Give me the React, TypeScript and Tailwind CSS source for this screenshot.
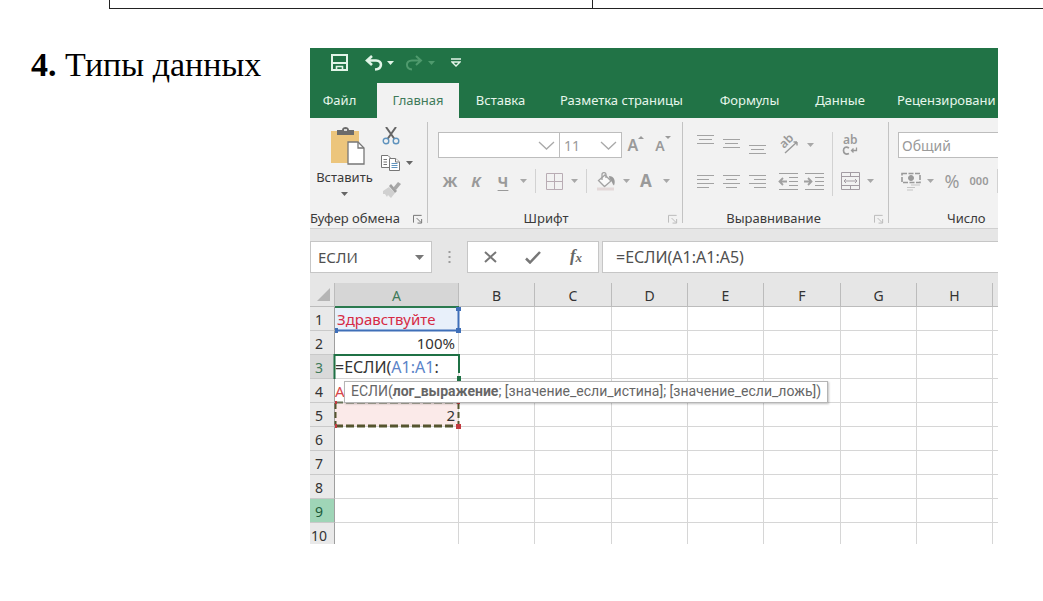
import React from 'react';

const COLUMNS = ['A', 'B', 'C', 'D', 'E', 'F', 'G', 'H'];
const ROWS = [1, 2, 3, 4, 5, 6, 7, 8, 9, 10];

function Arrow({ className = 'text-[#a8a8a8]' }: { className?: string }) {
  return (
    <svg width="7" height="4" viewBox="0 0 7 4" className={className} aria-hidden="true">
      <path d="M0 0h7L3.5 4z" fill="currentColor" />
    </svg>
  );
}

function IconButton({ label, className, children }: { label: string; className: string; children: React.ReactNode }) {
  return (
    <button type="button" aria-label={label} className={`flex shrink-0 items-center justify-center ${className}`}>
      {children}
    </button>
  );
}

function Launcher({ className }: { className: string }) {
  return (
    <button type="button" aria-label="Параметры группы" className={className}>
      <svg width="10" height="10" viewBox="0 0 11 11" fill="none" stroke="currentColor" strokeWidth="1.100" aria-hidden="true">
        <path d="M.5 9.500V1.500H9.500M4 4.500L9 9.500M9.500 5.500V10H5" />
      </svg>
    </button>
  );
}

function Lines({ rows }: { rows: [number, number, number][] }) {
  return (
    <svg width="18" height="26" viewBox="0 0 18 26" stroke="#a3a3a3" aria-hidden="true">
      {rows.map(([y, from, to]) => (
        <path key={y} d={`M${from} ${y + 0.5}H${to}`} />
      ))}
    </svg>
  );
}

function TitleBar() {
  return (
    <div className="flex h-[35px] items-center bg-[#217346] pl-[20px] pb-[6px] text-[#e2f5e8]">
      <IconButton label="Сохранить" className="w-[18px]">
        <svg width="17" height="17" viewBox="0 0 17 17" fill="none" stroke="currentColor" strokeWidth="2" aria-hidden="true">
          <path d="M1 1H16V16H1zM1 9H16" />
          <path d="M5.500 16V12.500H11.500V16" strokeWidth="1.600" />
        </svg>
      </IconButton>
      <IconButton label="Отменить" className="ml-[16px] w-[20px]">
        <svg width="18" height="16" viewBox="0 0 18 16" fill="none" stroke="currentColor" strokeWidth="2.600" aria-hidden="true">
          <path d="M7 1L2 5.500L7 10M2 5.500H11C18 5.500 17.500 14 10 14.500" />
        </svg>
      </IconButton>
      <IconButton label="Список отмены" className="w-[12px]"><Arrow className="text-[#e2f5e8]" /></IconButton>
      <IconButton label="Повторить" className="ml-[8px] w-[20px] text-[#4f9a6d]">
        <svg width="18" height="16" viewBox="0 0 18 16" fill="none" stroke="currentColor" strokeWidth="2" aria-hidden="true">
          <path d="M11 1L16 5.500L11 10M16 5.500H7C0 5.500 .5 14 7 14.500" />
        </svg>
      </IconButton>
      <IconButton label="Список повтора" className="w-[14px]"><Arrow className="text-[#4f9a6d]" /></IconButton>
      <IconButton label="Настройка панели" className="ml-[12px] w-[12px]">
        <svg width="10" height="9" viewBox="0 0 10 9" fill="none" stroke="currentColor" strokeWidth="1.400" aria-hidden="true">
          <path d="M0 1H10M1 4H9L5 8z" />
        </svg>
      </IconButton>
    </div>
  );
}

function Tabs() {
  const tab = 'shrink-0 whitespace-nowrap h-full text-center';
  return (
    <nav className="flex h-[35px] overflow-hidden bg-[#217346] text-[13px] text-[#e6f6eb]">
      <button type="button" className={`${tab} w-[67px] pr-[8px]`}>Файл</button>
      <button type="button" className={`${tab} w-[82px] bg-[#f2f2f2] text-[#3f7a5a]`}>Главная</button>
      <button type="button" className={`${tab} w-[83px]`}>Вставка</button>
      <button type="button" className={`${tab} w-[159px]`}>Разметка страницы</button>
      <button type="button" className={`${tab} w-[97px]`}>Формулы</button>
      <button type="button" className={`${tab} w-[84px]`}>Данные</button>
      <button type="button" className={`${tab} pl-[15px]`}>Рецензировани</button>
    </nav>
  );
}

function GroupDivider() {
  return <div className="mt-[4px] h-[101px] w-px shrink-0 bg-[#c3c3c3]" />;
}

function ClipboardGroup() {
  return (
    <section className="flex w-[117px] shrink-0 flex-col text-[#3a3a3a]">
      <div className="flex h-[91px] pt-[8px]">
        <button type="button" className="flex w-[69px] shrink-0 flex-col items-center text-[13px]">
          <svg width="36" height="40" viewBox="0 0 36 40" aria-hidden="true" className="ml-[6px] shrink-0">
            <path d="M1 5H29V37H1z" fill="#ecc57c" />
            <path d="M7 4H12C12 0 19 0 19 4H24V9H7z" fill="#6b6b6b" />
            <path d="M14 4H17" stroke="#fff" strokeWidth="1.500" />
            <path d="M18 16H28L34 22V38H18z" fill="#fff" stroke="#777" strokeWidth="1.300" />
            <path d="M28 16V22H34" fill="none" stroke="#777" strokeWidth="1.300" />
          </svg>
          <span className="leading-[22px]">Вставить</span>
          <span className="pt-[4px] leading-[18px]"><Arrow className="text-[#666]" /></span>
        </button>
        <div className="flex flex-col">
          <IconButton label="Вырезать" className="h-[20px] w-[24px]">
            <svg width="18" height="18" viewBox="0 0 18 18" fill="none" aria-hidden="true">
              <path d="M4 0L12.500 12M14 0L5.500 12" stroke="#666" strokeWidth="2" />
              <circle cx="4" cy="14" r="2.800" stroke="#5f93bd" strokeWidth="1.400" />
              <circle cx="14" cy="14" r="2.800" stroke="#5f93bd" strokeWidth="1.400" />
            </svg>
          </IconButton>
          <div className="mt-[7px] flex">
            <IconButton label="Копировать" className="h-[20px] w-[22px]">
              <svg width="19" height="18" viewBox="0 0 19 18" fill="#fff" stroke="#777" aria-hidden="true">
                <path d="M.5 1.500H7L10.500 5V13.500H.5z" />
                <path d="M2.500 5.500H6M2.500 8H6M2.500 10.500H6" />
                <path d="M8.500 4.500H14.500L18.500 8V16.500H8.500z" />
                <path d="M14.500 4.500V8H18.500" />
                <path d="M10.500 9.500H16.500M10.500 11.500H16.500M10.500 13.500H16.500" stroke="#5f93bd" />
              </svg>
            </IconButton>
            <IconButton label="Варианты копирования" className="w-[16px]"><Arrow className="text-[#666]" /></IconButton>
          </div>
          <IconButton label="Формат по образцу" className="mt-[7px] h-[20px] w-[24px]">
            <svg width="19" height="17" viewBox="0 0 19 17" aria-hidden="true">
              <path d="M1 9L7 5L13 11L9 16L6 13L5 15L3 12L1 12z" fill="#d0d0d0" />
              <path d="M7 4L9 2L15 9L13 11z" fill="#a0a0a0" />
              <path d="M11 6L16 0L19 2L14 8z" fill="#a8a8a8" />
            </svg>
          </IconButton>
        </div>
      </div>
      <div className="flex h-[19px] items-center justify-between pr-[4px] text-[13px]">
        <span className="whitespace-nowrap">Буфер обмена</span>
        <Launcher className="text-[#777]" />
      </div>
    </section>
  );
}

function Chevron() {
  return (
    <svg width="17" height="9" viewBox="0 0 17 9" fill="none" stroke="#a9a9a9" strokeWidth="1.300" className="pointer-events-none shrink-0" aria-hidden="true">
      <path d="M1 1L8.500 8L16 1" />
    </svg>
  );
}

function FontGroup() {
  return (
    <section className="flex w-[254px] shrink-0 flex-col pl-[10px] pt-[14px] text-[#9a9a9a]">
      <div className="flex h-[26px]">
        <div className="flex w-[122px] items-center border border-[#bdbdbd] bg-white pr-[4px]">
          <select aria-label="Шрифт" className="h-full min-w-0 flex-1 appearance-none bg-transparent"><option></option></select>
          <Chevron />
        </div>
        <div className="flex w-[62px] items-center border border-l-0 border-[#bdbdbd] bg-white pl-[4px] pr-[4px]">
          <select aria-label="Размер шрифта" className="h-full min-w-0 flex-1 appearance-none bg-transparent text-[14px]"><option>11</option></select>
          <Chevron />
        </div>
        <IconButton label="Увеличить размер шрифта" className="w-[28px] text-[16px] font-semibold">
          A<svg width="6" height="18" viewBox="0 0 6 18" aria-hidden="true"><path d="M0 3L3 0L6 3z" fill="currentColor" /></svg>
        </IconButton>
        <IconButton label="Уменьшить размер шрифта" className="w-[26px] text-[14px] font-semibold">
          A<svg width="6" height="18" viewBox="0 0 6 18" aria-hidden="true"><path d="M0 0H6L3 3z" fill="currentColor" /></svg>
        </IconButton>
      </div>
      <div className="mt-[8px] flex h-[30px] items-center text-[15px] font-bold">
        <IconButton label="Полужирный" className="w-[24px]">Ж</IconButton>
        <IconButton label="Курсив" className="w-[28px] italic">К</IconButton>
        <IconButton label="Подчёркнутый" className="w-[26px] underline underline-offset-3">Ч</IconButton>
        <IconButton label="Вид подчёркивания" className="w-[14px]"><Arrow /></IconButton>
        <div className="mx-[5px] h-[24px] w-px bg-[#d2d2d2]" />
        <IconButton label="Границы" className="w-[26px]">
          <svg width="17" height="17" viewBox="0 0 17 17" fill="none" stroke="#b9acb4" aria-hidden="true">
            <path d="M.5 .5H16.500V16.500H.5zM8.500 .5V16.500M.5 8.500H16.500" />
          </svg>
        </IconButton>
        <IconButton label="Вид границ" className="w-[14px]"><Arrow /></IconButton>
        <div className="mx-[5px] h-[24px] w-px bg-[#d2d2d2]" />
        <IconButton label="Цвет заливки" className="w-[28px]">
          <svg width="20" height="19" viewBox="0 0 20 19" fill="none" stroke="#a3a3a3" strokeWidth="1.300" aria-hidden="true">
            <path d="M9 3L15 9L8.500 14.500L2.500 8.500z" fill="#fafafa" />
            <path d="M6 8V2.500C6 0 10 0 10 2.500V6" />
            <path d="M13 4C18 4 20 9 18 13.500C16 12 16.500 9 13.500 7z" fill="#9a9a9a" stroke="none" />
            <path d="M1 17H18" stroke="#e3d8d8" strokeWidth="3" />
          </svg>
        </IconButton>
        <IconButton label="Выбор заливки" className="w-[12px]"><Arrow /></IconButton>
        <IconButton label="Цвет текста" className="w-[28px] text-[17px]">A</IconButton>
        <IconButton label="Выбор цвета" className="w-[12px]"><Arrow /></IconButton>
      </div>
      <div className="mt-[13px] flex h-[19px] items-center pr-[4px] text-[13px] text-[#3a3a3a]">
        <span className="flex-1 pr-[14px] text-center">Шрифт</span>
        <Launcher className="text-[#bbb]" />
      </div>
    </section>
  );
}

function AlignGroup() {
  return (
    <section className="flex w-[205px] shrink-0 flex-col pt-[14px] text-[#9a9a9a]">
      <div className="flex h-[64px]">
        <div className="flex w-[149px] flex-col pl-[10px]">
          <div className="flex h-[26px]">
            <IconButton label="По верхнему краю" className="w-[26px]"><Lines rows={[[3, 0, 17], [7, 2, 15], [11, 0, 17]]} /></IconButton>
            <IconButton label="По середине" className="w-[26px]"><Lines rows={[[7, 0, 17], [11, 2, 15], [15, 0, 17]]} /></IconButton>
            <IconButton label="По нижнему краю" className="w-[26px]"><Lines rows={[[13, 0, 17], [17, 2, 15], [21, 0, 17]]} /></IconButton>
            <IconButton label="Ориентация" className="w-[34px]">
              <svg width="22" height="20" viewBox="0 0 22 20" fill="none" stroke="currentColor" strokeWidth="1.400" className="overflow-visible" aria-hidden="true">
                <text x="0" y="0" transform="translate(7 14) rotate(-45)" fontSize="12" fontWeight="600" fill="currentColor" stroke="none">ab</text>
                <path d="M8 18L20 7M20 7H16.500M20 7V10.500" />
              </svg>
            </IconButton>
            <IconButton label="Варианты ориентации" className="w-[10px]"><Arrow /></IconButton>
          </div>
          <div className="mt-[8px] flex h-[30px]">
            <IconButton label="По левому краю" className="w-[26px]"><Lines rows={[[7, 0, 17], [11, 0, 12], [15, 0, 17], [19, 0, 12]]} /></IconButton>
            <IconButton label="По центру" className="w-[26px]"><Lines rows={[[7, 0, 17], [11, 3, 14], [15, 0, 17], [19, 3, 14]]} /></IconButton>
            <IconButton label="По правому краю" className="w-[26px]"><Lines rows={[[7, 0, 17], [11, 5, 17], [15, 0, 17], [19, 5, 17]]} /></IconButton>
            <IconButton label="Уменьшить отступ" className="w-[34px]">
              <svg width="20" height="17" viewBox="0 0 20 17" stroke="#a0a0a0" fill="none" aria-hidden="true">
                <path d="M1 .5H20M11 4.500H20M11 8.500H20M11 12.500H20M1 16.500H20" />
                <path d="M9 8.500H2M5 5L1.500 8.500L5 12" strokeWidth="1.800" />
              </svg>
            </IconButton>
            <IconButton label="Увеличить отступ" className="w-[18px]">
              <svg width="20" height="17" viewBox="0 0 20 17" stroke="#a0a0a0" fill="none" aria-hidden="true" className="shrink-0">
                <path d="M1 .5H20M11 4.500H20M11 8.500H20M11 12.500H20M1 16.500H20" />
                <path d="M0 8.500H7M4 5L7.500 8.500L4 12" strokeWidth="1.800" />
              </svg>
            </IconButton>
          </div>
        </div>
        <div className="w-px bg-[#d2d2d2]" />
        <div className="flex flex-col pl-[3px]">
          <IconButton label="Перенести текст" className="h-[26px] w-[28px]">
            <svg width="18" height="22" viewBox="0 0 18 22" fill="none" stroke="currentColor" strokeWidth="1.300" className="overflow-visible" aria-hidden="true">
              <text x="2" y="10" fontSize="12" fontWeight="600" fill="currentColor" stroke="none">ab</text>
              <path d="M8 14C4.500 12 2.500 14 2.500 16.500C2.500 19 4.500 21 8 19.500" strokeWidth="1.700" />
              <path d="M15.500 13.500V16.500H10.500M12.500 14.500L10.500 16.500L12.500 18.500" />
            </svg>
          </IconButton>
          <div className="mt-[8px] flex h-[30px]">
            <IconButton label="Объединить ячейки" className="w-[28px]">
              <svg width="19" height="18" viewBox="0 0 19 18" fill="none" stroke="#a39ca3" aria-hidden="true">
                <path d="M.5 .5H18.500V17.500H.5zM.5 4.500H18.500M.5 13.500H18.500M9.500 .5V4.500M9.500 13.500V17.500" />
                <path d="M3 9H16M5 7L3 9L5 11M14 7L16 9L14 11" />
              </svg>
            </IconButton>
            <IconButton label="Варианты объединения" className="w-[12px]"><Arrow /></IconButton>
          </div>
        </div>
      </div>
      <div className="mt-[13px] flex h-[19px] items-center pr-[4px] text-[13px] text-[#3a3a3a]">
        <span className="flex-1 pr-[10px] text-center">Выравнивание</span>
        <Launcher className="text-[#bbb]" />
      </div>
    </section>
  );
}

function NumberGroup() {
  return (
    <section className="flex min-w-0 flex-1 flex-col overflow-hidden pl-[9px] pt-[14px] text-[#9a9a9a]">
      <div className="flex h-[26px] border border-r-0 border-[#bdbdbd] bg-white pl-[3px]">
        <select aria-label="Числовой формат" className="h-full flex-1 appearance-none bg-transparent text-[14px]"><option>Общий</option></select>
      </div>
      <div className="mt-[8px] flex h-[30px] items-center">
        <IconButton label="Финансовый формат" className="w-[26px]">
          <svg width="20" height="19" viewBox="0 0 20 19" fill="none" stroke="#999" aria-hidden="true">
            <path d="M1 1.500H19V10.500H1z" strokeWidth="1.600" strokeDasharray="5 1.500" />
            <circle cx="10" cy="6" r="2.500" fill="#999" />
            <path d="M10 13H19M6 15.500H14M6 18H12" stroke="#c4c4c4" />
          </svg>
        </IconButton>
        <IconButton label="Выбор валюты" className="w-[12px]"><Arrow /></IconButton>
        <IconButton label="Процентный формат" className="w-[32px] text-[18px]">%</IconButton>
        <IconButton label="Формат с разделителями" className="w-[22px] text-[11px] font-semibold">000</IconButton>
        <div className="ml-auto h-[24px] w-px bg-[#d2d2d2]" />
      </div>
      <div className="mt-[13px] flex h-[19px] items-center pl-[49px] text-[13px] text-[#3a3a3a]">Число</div>
    </section>
  );
}

function FormulaBar() {
  return (
    <div className="flex h-[54px] items-start bg-[#e6e6e6] pt-[12px] text-[15px] text-[#505050]">
      <div className="flex h-[32px] w-[122px] shrink-0 items-center border border-[#c6c6c6] bg-white pl-[7px] pr-[7px]">
        <input aria-label="Имя ячейки" defaultValue="ЕСЛИ" className="min-w-0 flex-1 bg-transparent outline-none" />
        <IconButton label="Список имён" className="h-full">
          <svg width="9" height="5" viewBox="0 0 9 5" aria-hidden="true"><path d="M0 0H9L4.500 5z" fill="#777" /></svg>
        </IconButton>
      </div>
      <svg width="35" height="32" viewBox="0 0 35 32" fill="#9c9c9c" className="shrink-0" aria-hidden="true">
        <path d="M16.500 10h2v2h-2zM16.500 15h2v2h-2zM16.500 20h2v2h-2z" />
      </svg>
      <div className="flex h-[32px] w-[132px] shrink-0 items-center border border-[#c6c6c6] bg-white">
        <IconButton label="Отмена" className="h-full w-[44px]">
          <svg width="13" height="12" viewBox="0 0 13 12" stroke="#777" strokeWidth="2" aria-hidden="true"><path d="M1 1L12 11M12 1L1 11" /></svg>
        </IconButton>
        <IconButton label="Ввод" className="h-full w-[42px]">
          <svg width="16" height="13" viewBox="0 0 16 13" fill="none" stroke="#777" strokeWidth="2.500" aria-hidden="true"><path d="M1 7.500L5 11.500L15 1" /></svg>
        </IconButton>
        <IconButton label="Вставить функцию" className="h-full w-[44px] pb-[2px] font-['Liberation_Serif',serif] text-[17px] italic text-[#666]">
          <b>f</b><b className="pt-[3px] text-[13px]">x</b>
        </IconButton>
      </div>
      <div className="ml-[3px] flex h-[32px] min-w-0 flex-1 items-center border border-r-0 border-[#c6c6c6] bg-white pl-[13px] text-[16px]">
        <input aria-label="Строка формул" defaultValue="=ЕСЛИ(A1:A1:A5)" className="min-w-0 flex-1 bg-transparent outline-none" />
      </div>
    </div>
  );
}

function cellClass(column: string, row: number) {
  if (column !== 'A') return '';
  if (row === 1) return 'bg-[#e8f0fa] text-[#d62b45] pl-[2px]';
  if (row === 2) return 'text-right pr-[3px]';
  if (row === 3) return 'text-[16px]';
  if (row === 4) return 'text-[#d8464a]';
  if (row === 5) return 'bg-[#fbeae9] text-right pr-[3px]';
  return '';
}

function cellContent(column: string, row: number) {
  if (column !== 'A') return null;
  if (row === 1) return 'Здравствуйте';
  if (row === 2) return '100%';
  if (row === 3) return <>=ЕСЛИ(<span className="text-[#5b84c8]">A1:A1</span>:</>;
  if (row === 4) return 'A';
  if (row === 5) return '2';
  return null;
}

function Ranges() {
  return (
    <svg width="134" height="130" viewBox="0 0 134 130" fill="none" className="pointer-events-none absolute left-[20px] top-[20px]" aria-hidden="true">
      <path d="M5 4H129" stroke="#2b7a4f" strokeWidth="2" />
      <path d="M5 27.500H129M128.500 6V28" stroke="#3f6fb8" strokeWidth="2" />
      <path d="M5 25h3v5h-3zM126 4h5v4h-5zM126 25h5v5h-5z" fill="#3f6fb8" />
      <path d="M129 70V52H4.500V76" stroke="#1f7145" strokeWidth="2" />
      <path d="M127 73h4v5h-4z" fill="#1f7145" />
      <path d="M5 99.500H129" stroke="#68745a" strokeWidth="2" strokeDasharray="8 3" />
      <path d="M5 123H129" stroke="#55552f" strokeWidth="3" strokeDasharray="8 3" />
      <path d="M5.500 100V122M128.500 100V122" stroke="#55552f" strokeWidth="2" strokeDasharray="6 3" />
      <path d="M5 98h2v3h-2zM5 121h2v4h-2zM127 98h3v3h-3zM126 121h5v5h-5z" fill="#c23b40" />
    </svg>
  );
}

function Sheet() {
  return (
    <div className="relative h-[261px] overflow-hidden bg-white">
      <table className="w-full table-fixed border-separate border-spacing-0 text-[15px] text-[#333]">
        <colgroup>
          <col className="w-[25px]" />
          <col className="w-[124px]" />
          <col className="w-[76px]" />
          <col className="w-[77px]" />
          <col className="w-[76px]" />
          <col className="w-[76px]" />
          <col className="w-[77px]" />
          <col className="w-[76px]" />
          <col className="w-[76px]" />
          <col />
        </colgroup>
        <thead>
          <tr className="bg-[#e6e6e6]">
            <th aria-label="Выделить всё" className="h-6 border-b border-r border-[#bcbcbc] p-0">
              <svg width="15" height="15" viewBox="0 0 15 15" className="ml-[6px]" aria-hidden="true"><path d="M14 1V14H1z" fill="#b5b5b5" /></svg>
            </th>
            {COLUMNS.map((c) => (
              <th
                key={c}
                scope="col"
                className={`h-6 border-b border-r border-[#bcbcbc] p-0 pt-[2px] text-[14px] leading-[21px] font-normal ${c === 'A' ? 'bg-[#d6d6d6] text-[#3f7a5a]' : ''}`}
              >
                {c}
              </th>
            ))}
            <td className="border-b border-[#bcbcbc] p-0" />
          </tr>
        </thead>
        <tbody>
          {ROWS.map((r) => (
            <tr key={r}>
              <th
                scope="row"
                className={`h-6 border-b border-r border-b-[#c9c9c9] border-r-[#9f9f9f] p-0 pt-[2px] pr-[6px] text-center text-[14px] leading-[21px] font-normal ${
                  r === 9 ? 'bg-[#9fd5b7] text-[#1d5c3a]' : r === 3 ? 'bg-[#d9d9d9] text-[#3f7a5a]' : 'bg-[#e9e9e9]'
                }`}
              >
                {r}
              </th>
              {COLUMNS.map((c) => (
                <td key={c} className={`h-6 overflow-hidden whitespace-nowrap border-b border-r border-[#d6d6d6] p-0 pt-[2px] leading-[21px] ${cellClass(c, r)}`}>
                  {cellContent(c, r)}
                </td>
              ))}
              <td className="border-b border-[#d6d6d6] p-0" />
            </tr>
          ))}
        </tbody>
      </table>
      <Ranges />
      <div role="tooltip" className="absolute left-[34px] top-[98px] h-[22px] whitespace-nowrap border border-[#b5b5b5] bg-white px-[6px] font-['Roboto','Noto_Sans',sans-serif] text-[14px] leading-[19px] text-[#666] shadow-[1px_1px_2px_#00000040]">
        ЕСЛИ(<b>лог_выражение</b>; [значение_если_истина]; [значение_если_ложь])
      </div>
    </div>
  );
}

export default function App() {
  return (
    <div className="min-h-screen bg-white">
      <div className="ml-[109px] flex h-[9px] border-b border-l border-[#222]">
        <div className="w-[483px] border-r border-[#222]" />
      </div>
      <main className="flex items-start pl-[31px] pr-[45px] pt-[39px]">
        <h1 className="w-[279px] shrink-0 whitespace-nowrap font-['Liberation_Serif',serif] text-[34px] leading-[34px] text-black">
          <b>4.</b> Типы данных
        </h1>
        <div className="min-w-0 flex-1 overflow-hidden font-['Noto_Sans','Open_Sans',sans-serif]">
          <TitleBar />
          <Tabs />
          <div className="flex h-[111px] overflow-hidden border-b border-[#d0d0d0] bg-[#f2f2f2]">
            <ClipboardGroup />
            <GroupDivider />
            <FontGroup />
            <GroupDivider />
            <AlignGroup />
            <GroupDivider />
            <NumberGroup />
          </div>
          <FormulaBar />
          <Sheet />
        </div>
      </main>
    </div>
  );
}
